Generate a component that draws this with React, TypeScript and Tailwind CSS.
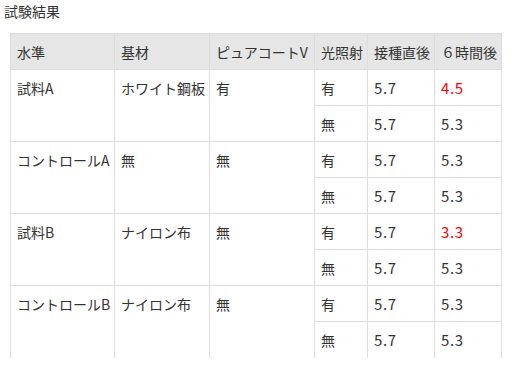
import React from "react";

type Row = { light: string; t0: string; t6: string; red?: boolean };
type Group = { name: string; base: string; coat: string; rows: Row[] };

const groups: Group[] = [
  { name: "試料A", base: "ホワイト鋼板", coat: "有", rows: [ { light: "有", t0: "5.7", t6: "4.5", red: true }, { light: "無", t0: "5.7", t6: "5.3" } ] },
  { name: "コントロールA", base: "無", coat: "無", rows: [ { light: "有", t0: "5.7", t6: "5.3" }, { light: "無", t0: "5.7", t6: "5.3" } ] },
  { name: "試料B", base: "ナイロン布", coat: "無", rows: [ { light: "有", t0: "5.7", t6: "3.3", red: true }, { light: "無", t0: "5.7", t6: "5.3" } ] },
  { name: "コントロールB", base: "ナイロン布", coat: "無", rows: [ { light: "有", t0: "5.7", t6: "5.3" }, { light: "無", t0: "5.7", t6: "5.3" } ] },
];

const font = { fontFamily: '"Noto Sans CJK JP", "Noto Sans", sans-serif' };

export default function App() {
  const cell = "border border-[#dddddd] px-[6px] align-middle whitespace-nowrap";
  const span = "border border-[#dddddd] px-[6px] pt-[8px] align-top whitespace-nowrap";
  const num = " text-[15px] tracking-[0.6px]";
  return (
    <div className="w-[514px] h-[370px] bg-white text-[#333333] text-[14px] leading-[20px] overflow-hidden" style={font}>
      <div className="pl-[4px] pt-[1px] h-[33px]">試験結果</div>
      <table className="ml-[10px] border-collapse table-fixed w-[491px]">
        <colgroup>
          <col className="w-[104px]" />
          <col className="w-[95px]" />
          <col className="w-[105px]" />
          <col className="w-[53px]" />
          <col className="w-[67px]" />
          <col className="w-[67px]" />
        </colgroup>
        <thead>
          <tr className="h-[36px] bg-[#e6e6e6]">
            <th className={cell + " text-left font-normal"}>水準</th>
            <th className={cell + " text-left font-normal"}>基材</th>
            <th className={cell + " text-left font-normal"}>ピュアコートV</th>
            <th className={cell + " text-left font-normal"}>光照射</th>
            <th className={cell + " text-left font-normal"}>接種直後</th>
            <th className={cell + " text-left font-normal"}>６時間後</th>
          </tr>
        </thead>
        <tbody>
          {groups.map((g, gi) =>
            g.rows.map((r, ri) => {
              const last = gi === groups.length - 1 && ri === 1;
              const c = cell + (last ? " border-b-0" : "");
              const s = span + (gi === groups.length - 1 ? " border-b-0" : "");
              return (
                <tr key={gi + "-" + ri} className="h-[36px]">
                  {ri === 0 && (
                    <>
                      <td rowSpan={2} className={s}>{g.name}</td>
                      <td rowSpan={2} className={s}>{g.base}</td>
                      <td rowSpan={2} className={s}>{g.coat}</td>
                    </>
                  )}
                  <td className={c}>{r.light}</td>
                  <td className={c + num}>{r.t0}</td>
                  <td className={c + num + (r.red ? " text-[#ff0000]" : "")}>{r.t6}</td>
                </tr>
              );
            })
          )}
        </tbody>
      </table>
    </div>
  );
}
